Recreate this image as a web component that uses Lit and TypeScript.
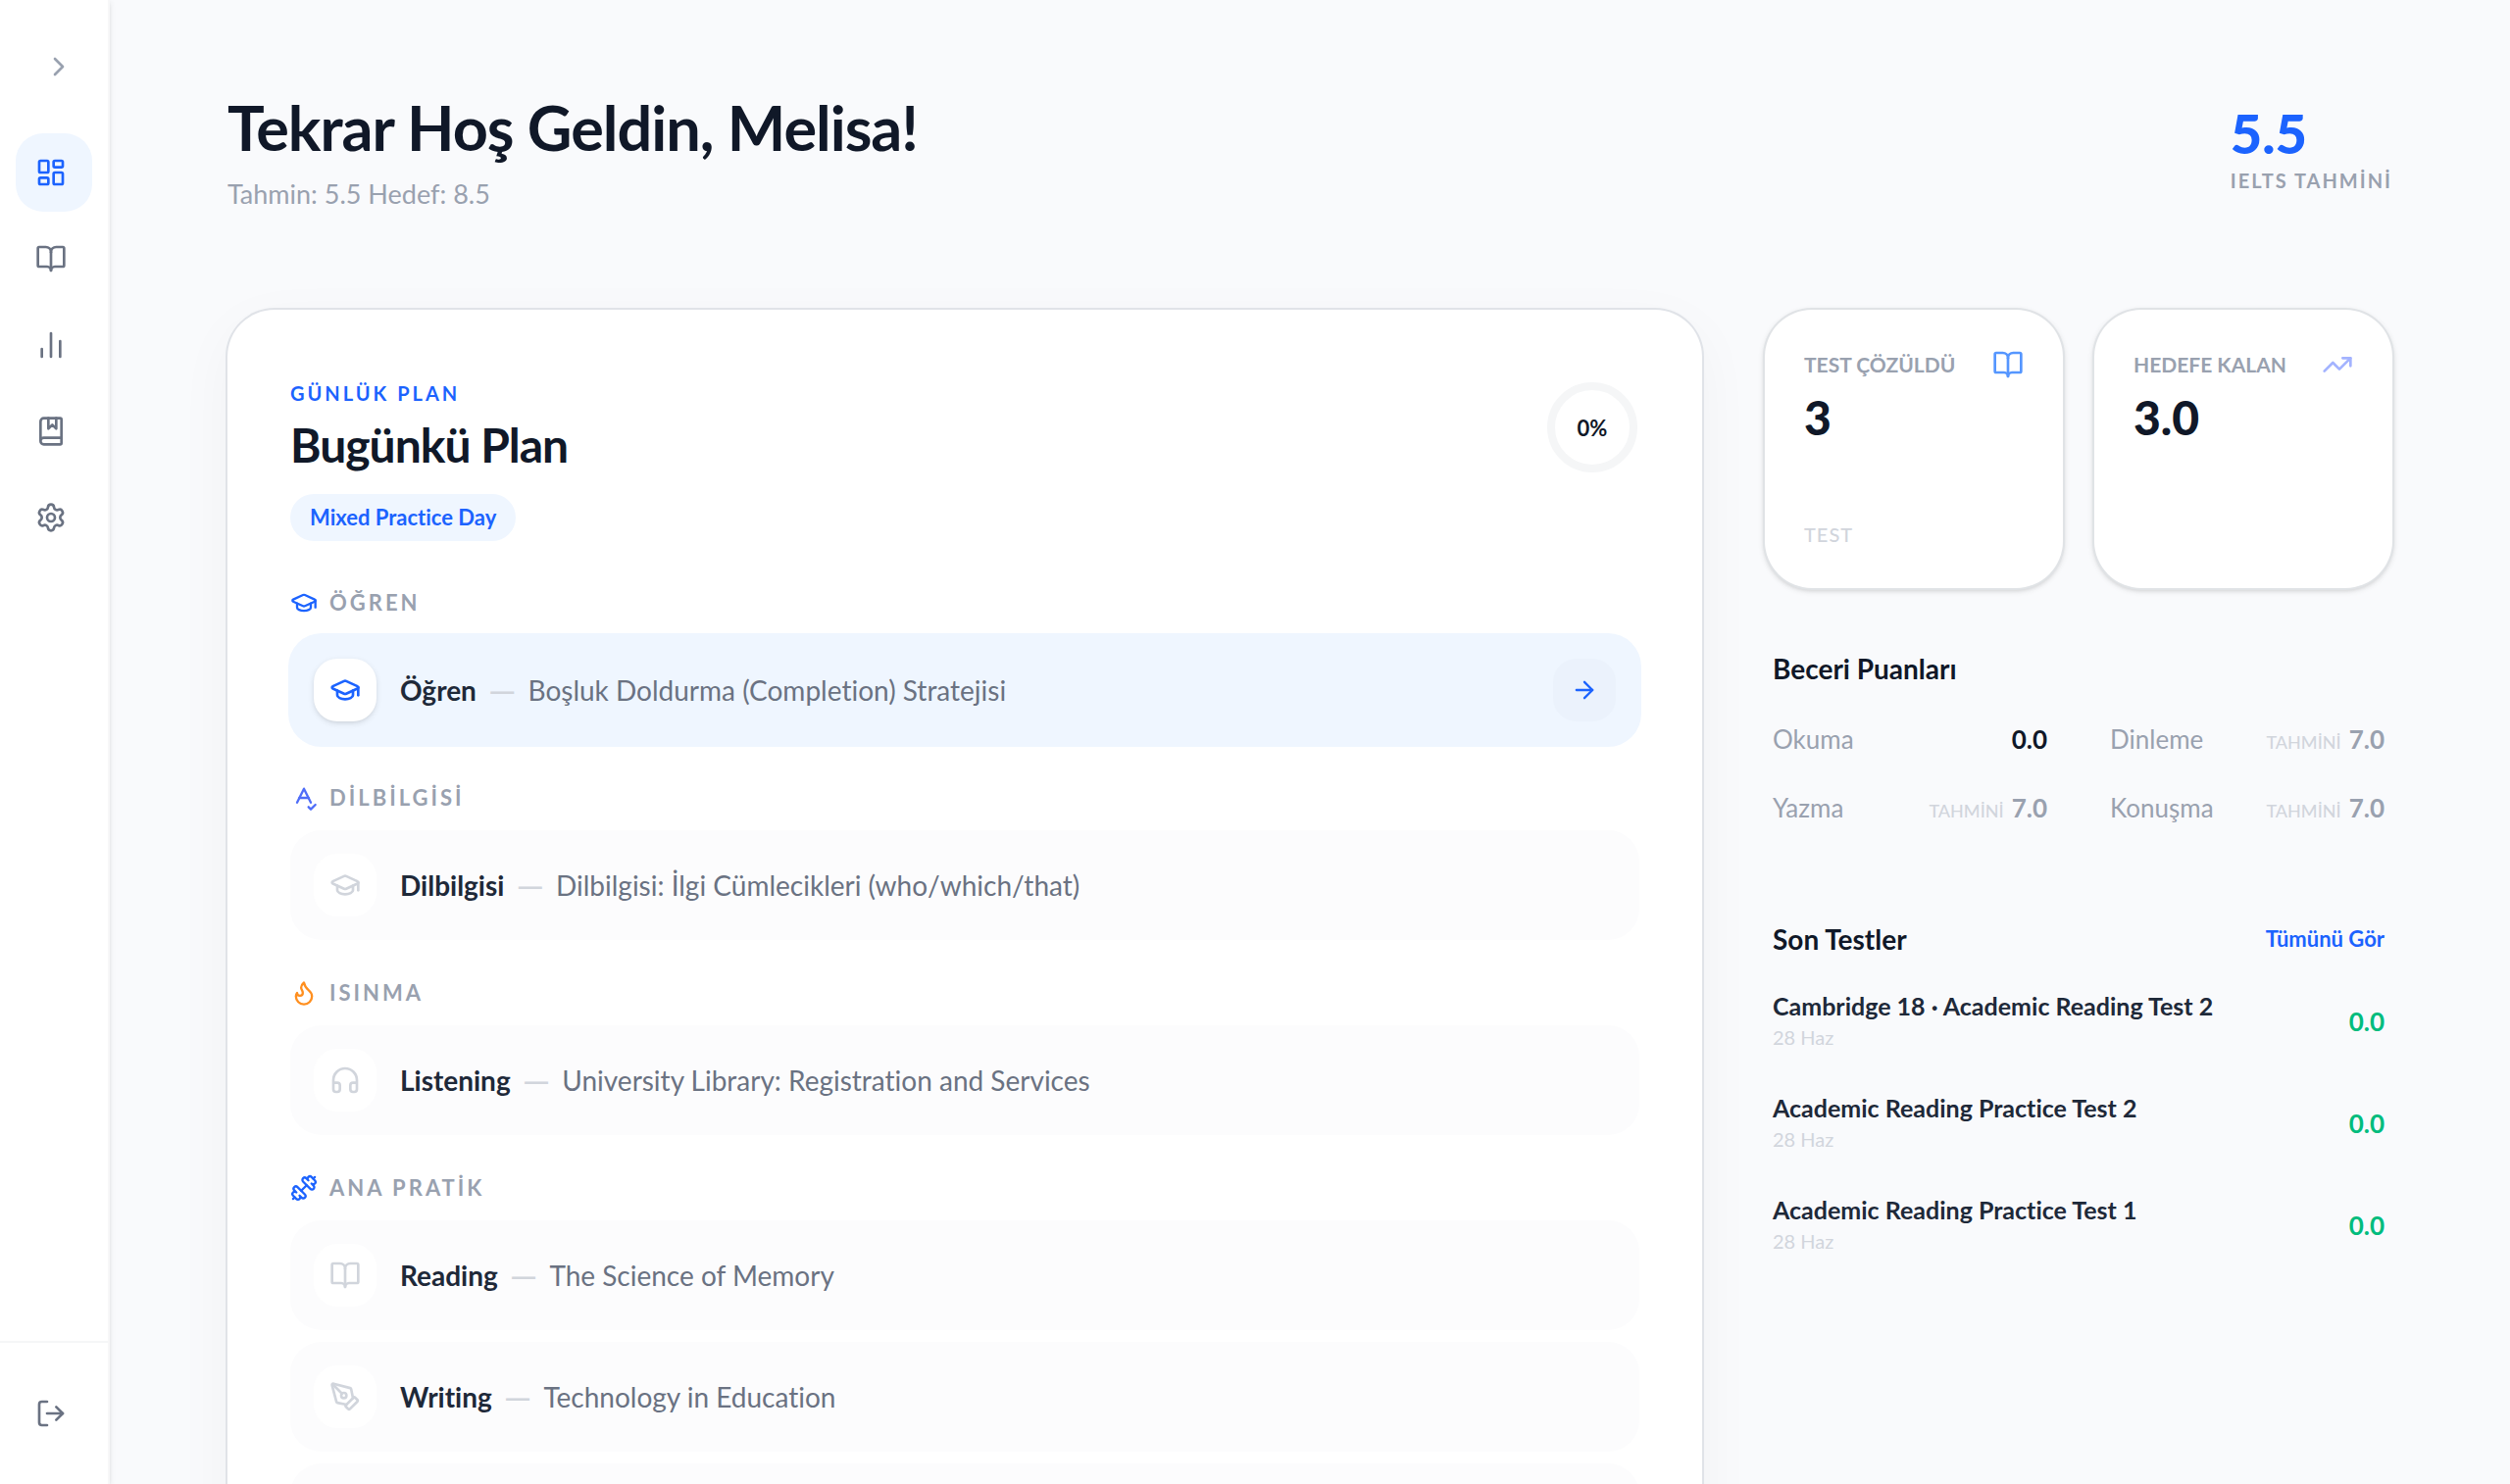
import { LitElement, html, css, svg, nothing } from "lit";
import { customElement, property, state } from "lit/decorators.js";
import { classMap } from "lit/directives/class-map.js";

const p = (...ds: string[]) => svg`${ds.map((d) => svg`<path d=${d}></path>`)}`;

const ICONS: Record<string, unknown> = {
  chevron: p("m9 18 6-6-6-6"),
  dashboard: svg`<rect width="7" height="9" x="3" y="3" rx="1"></rect><rect width="7" height="5" x="14" y="3" rx="1"></rect><rect width="7" height="9" x="14" y="12" rx="1"></rect><rect width="7" height="5" x="3" y="16" rx="1"></rect>`,
  book: p(
    "M12 7v14",
    "M3 18a1 1 0 0 1-1-1V4a1 1 0 0 1 1-1h5a4 4 0 0 1 4 4 4 4 0 0 1 4-4h5a1 1 0 0 1 1 1v13a1 1 0 0 1-1 1h-6a3 3 0 0 0-3 3 3 3 0 0 0-3-3z"
  ),
  bars: p("M5 21v-6", "M12 21V3", "M19 21V9"),
  marked: p(
    "M10 2v8l3-3 3 3V2",
    "M4 19.5v-15A2.5 2.5 0 0 1 6.5 2H19a1 1 0 0 1 1 1v18a1 1 0 0 1-1 1H6.5a1 1 0 0 1 0-5H20"
  ),
  settings: svg`<path d="M9.671 4.136a2.34 2.34 0 0 1 4.659 0 2.34 2.34 0 0 0 3.319 1.915 2.34 2.34 0 0 1 2.33 4.033 2.34 2.34 0 0 0 0 3.831 2.34 2.34 0 0 1-2.33 4.033 2.34 2.34 0 0 0-3.319 1.915 2.34 2.34 0 0 1-4.659 0 2.34 2.34 0 0 0-3.32-1.915 2.34 2.34 0 0 1-2.33-4.033 2.34 2.34 0 0 0 0-3.831A2.34 2.34 0 0 1 6.35 6.051a2.34 2.34 0 0 0 3.319-1.915"></path><circle cx="12" cy="12" r="3"></circle>`,
  logout: p("m16 17 5-5-5-5", "M21 12H9", "M9 21H5a2 2 0 0 1-2-2V5a2 2 0 0 1 2-2h4"),
  cap: p(
    "M21.42 10.922a1 1 0 0 0-.019-1.838L12.83 5.18a2 2 0 0 0-1.66 0L2.6 9.08a1 1 0 0 0 0 1.832l8.57 3.908a2 2 0 0 0 1.66 0z",
    "M22 10v6",
    "M6 12.5V16a6 3 0 0 0 12 0v-3.5"
  ),
  spell: p("m6 16 6-12 6 12", "M8 12h8", "m16 20 2 2 4-4"),
  flame: p(
    "M8.5 14.5A2.5 2.5 0 0 0 11 12c0-1.38-.5-2-1-3-1.072-2.143-.224-4.054 2-6 .5 2.5 2 4.9 4 6.5 2 1.6 3 3.5 3 5.5a7 7 0 1 1-14 0c0-1.153.433-2.294 1-3a2.5 2.5 0 0 0 2.5 2.5z"
  ),
  dumbbell: p(
    "M17.596 12.768a2 2 0 1 0 2.829-2.829l-1.768-1.767a2 2 0 0 0 2.828-2.829l-2.828-2.828a2 2 0 0 0-2.829 2.828l-1.767-1.768a2 2 0 1 0-2.829 2.829z",
    "m2.5 21.5 1.4-1.4",
    "m20.1 3.9 1.4-1.4",
    "M5.343 21.485a2 2 0 1 0 2.829-2.828l1.767 1.768a2 2 0 1 0 2.829-2.829l-6.364-6.364a2 2 0 1 0-2.829 2.829l1.768 1.767a2 2 0 0 0-2.828 2.829z",
    "m9.6 14.4 4.8-4.8"
  ),
  headphones: p(
    "M3 14h3a2 2 0 0 1 2 2v3a2 2 0 0 1-2 2H5a2 2 0 0 1-2-2v-7a9 9 0 0 1 18 0v7a2 2 0 0 1-2 2h-1a2 2 0 0 1-2-2v-3a2 2 0 0 1 2-2h3"
  ),
  pen: svg`${p(
    "M15.707 21.293a1 1 0 0 1-1.414 0l-1.586-1.586a1 1 0 0 1 0-1.414l5.586-5.586a1 1 0 0 1 1.414 0l1.586 1.586a1 1 0 0 1 0 1.414z",
    "m18 13-1.375-6.874a1 1 0 0 0-.746-.776L3.235 2.028a1 1 0 0 0-1.207 1.207L5.35 15.879a1 1 0 0 0 .776.746L13 18",
    "m2.3 2.3 7.286 7.286"
  )}<circle cx="11" cy="11" r="2"></circle>`,
  arrow: p("M5 12h14", "m12 5 7 7-7 7"),
  trend: p("M16 7h6v6", "m22 7-8.5 8.5-5-5L2 17"),
};

const icon = (name: string, cls = "") => html`<svg
  class="icon ${cls}"
  viewBox="0 0 24 24"
  aria-hidden="true"
>
  ${ICONS[name]}
</svg>`;

const base = css`
  * {
    box-sizing: border-box;
    margin: 0;
    padding: 0;
  }
  button {
    font: inherit;
    color: inherit;
    border: 0;
    background: none;
    cursor: pointer;
  }
  a {
    color: inherit;
    text-decoration: none;
  }
  ul {
    list-style: none;
  }
  .icon {
    display: block;
    flex: none;
    width: 32px;
    height: 32px;
    fill: none;
    stroke: currentColor;
    stroke-width: 2;
    stroke-linecap: round;
    stroke-linejoin: round;
  }
  .icon.small {
    width: 28px;
    height: 28px;
  }
`;

@customElement("app-sidebar")
class AppSidebar extends LitElement {
  @state() private current = "dashboard";
  private items = ["dashboard", "book", "bars", "marked", "settings"];

  static styles = [
    base,
    css`
      :host {
        display: flex;
        flex-direction: column;
        flex: none;
        width: 112px;
        background: #fff;
        border-right: 2px solid #f7f7f8;
        box-shadow: 0 2px 6px rgba(0, 0, 0, 0.1), 0 2px 4px -2px rgba(0, 0, 0, 0.1);
      }
      .top {
        display: flex;
        justify-content: flex-end;
        padding: 40px 22px 40px 16px;
      }
      .toggle {
        display: grid;
        place-items: center;
        width: 56px;
        height: 56px;
        color: #99a1af;
      }
      .nav {
        flex: 1;
        display: flex;
        flex-direction: column;
        gap: 8px;
        padding: 0 16px;
      }
      .item {
        display: flex;
        align-items: center;
        width: 100%;
        height: 80px;
        padding: 0 20px;
        border-radius: 28px;
        color: #6a7282;
      }
      .item.active {
        background: #eff6ff;
        color: #1c63fe;
      }
      .foot {
        padding: 32px 16px;
        border-top: 2px solid #f5f6f7;
      }
    `,
  ];

  render() {
    return html`
      <div class="top">
        <button class="toggle">${icon("chevron")}</button>
      </div>
      <nav class="nav">
        ${this.items.map(
          (name) => html`<button
            class=${classMap({ item: true, active: name === this.current })}
            @click=${() => (this.current = name)}
          >
            ${icon(name)}
          </button>`
        )}
      </nav>
      <div class="foot"><button class="item">${icon("logout")}</button></div>
    `;
  }
}

interface Task {
  icon?: string;
  name?: string;
  text?: string;
  active?: boolean;
}
interface Section {
  icon: string;
  tone: string;
  title: string;
  tasks: Task[];
}

const SECTIONS: Section[] = [
  {
    icon: "cap",
    tone: "blue",
    title: "ÖĞREN",
    tasks: [{ icon: "cap", name: "Öğren", text: "Boşluk Doldurma (Completion) Stratejisi", active: true }],
  },
  {
    icon: "spell",
    tone: "indigo",
    title: "DİLBİLGİSİ",
    tasks: [{ icon: "cap", name: "Dilbilgisi", text: "Dilbilgisi: İlgi Cümlecikleri (who/which/that)" }],
  },
  {
    icon: "flame",
    tone: "orange",
    title: "ISINMA",
    tasks: [{ icon: "headphones", name: "Listening", text: "University Library: Registration and Services" }],
  },
  {
    icon: "dumbbell",
    tone: "blue",
    title: "ANA PRATİK",
    tasks: [
      { icon: "book", name: "Reading", text: "The Science of Memory" },
      { icon: "pen", name: "Writing", text: "Technology in Education" },
      {},
    ],
  },
];

@customElement("daily-plan")
class DailyPlan extends LitElement {
  @property({ type: Number }) progress = 0;

  static styles = [
    base,
    css`
      :host {
        display: block;
      }
      .card {
        padding: 72px 64px;
        background: #fff;
        border-radius: 48px;
        box-shadow: 0 0 0 2px #e0e3e8, 0 16px 60px rgba(0, 0, 0, 0.04);
      }
      .head {
        display: flex;
        justify-content: space-between;
        align-items: flex-start;
        margin-bottom: 49px;
      }
      .eyebrow {
        font-size: 20px;
        line-height: 26px;
        font-weight: 700;
        letter-spacing: 3px;
        color: #1c63fe;
      }
      h2 {
        margin: 10px 0 20px;
        font-size: 48px;
        line-height: 60px;
        font-weight: 700;
        letter-spacing: -1px;
        color: #101828;
      }
      .badge {
        display: inline-block;
        padding: 0 20px;
        font-size: 22px;
        line-height: 48px;
        font-weight: 700;
        border-radius: 24px;
        background: #eff6ff;
        color: #1c63fe;
      }
      .ring {
        display: grid;
        place-items: center;
        width: 92px;
        height: 92px;
        margin: 2px;
        border: 8px solid #f5f6f7;
        border-radius: 50%;
        font-size: 22px;
        font-weight: 700;
        color: #101828;
      }
      .sections {
        display: grid;
        gap: 40px;
      }
      .label {
        display: flex;
        align-items: center;
        gap: 12px;
        margin-bottom: 19px;
        font-size: 22px;
        line-height: 28px;
        font-weight: 700;
        letter-spacing: 3px;
        color: #99a1af;
      }
      .blue {
        color: #1c63fe;
      }
      .indigo {
        color: #4f6df8;
      }
      .orange {
        color: #ff8f1f;
      }
      .tasks {
        display: grid;
        gap: 12px;
      }
      .task {
        display: flex;
        align-items: center;
        gap: 24px;
        min-height: 112px;
        padding: 24px;
        border-radius: 32px;
        background: #fcfcfd;
      }
      .task.active {
        background: #eff6ff;
        box-shadow: 0 0 0 2px #eff6ff;
      }
      .tile {
        display: grid;
        place-items: center;
        flex: none;
        width: 64px;
        height: 64px;
        border-radius: 24px;
        background: #fff;
        color: #d1d5dc;
      }
      .active .tile {
        color: #1c63fe;
        box-shadow: 0 2px 6px rgba(0, 0, 0, 0.1), 0 2px 4px -2px rgba(0, 0, 0, 0.1);
      }
      .line {
        display: flex;
        align-items: center;
        gap: 12px;
        flex: 1;
        font-size: 28px;
        line-height: 40px;
        color: #6a7282;
      }
      .name {
        font-weight: 700;
        color: #1e2939;
      }
      .dash {
        font-size: 36px;
        color: #d1d5dc;
      }
      .go {
        display: grid;
        place-items: center;
        width: 64px;
        height: 64px;
        border-radius: 24px;
        background: #ebf2fc;
        color: #1c63fe;
      }
    `,
  ];

  private task(t: Task) {
    return html`<li class=${classMap({ task: true, active: !!t.active })}>
      ${t.icon
        ? html`<span class="tile">${icon(t.icon)}</span>
            <p class="line">
              <strong class="name">${t.name}</strong><span class="dash">—</span><span>${t.text}</span>
            </p>`
        : nothing}
      ${t.active ? html`<button class="go">${icon("arrow", "small")}</button>` : nothing}
    </li>`;
  }

  render() {
    return html`<article class="card">
      <header class="head">
        <div>
          <p class="eyebrow">GÜNLÜK PLAN</p>
          <h2>Bugünkü Plan</h2>
          <span class="badge">Mixed Practice Day</span>
        </div>
        <div class="ring">${this.progress}%</div>
      </header>
      <div class="sections">
        ${SECTIONS.map(
          (s) => html`<section>
            <h3 class="label">${icon(s.icon, `small ${s.tone}`)}${s.title}</h3>
            <ul class="tasks">
              ${s.tasks.map((t) => this.task(t))}
            </ul>
          </section>`
        )}
      </div>
    </article>`;
  }
}

const STATS = [
  { label: "TEST ÇÖZÜLDÜ", value: "3", note: "TEST", icon: "book", tone: "sky" },
  { label: "HEDEFE KALAN", value: "3.0", note: "", icon: "trend", tone: "lilac" },
];
const SKILLS = [
  { name: "Okuma", score: "0.0", guess: false },
  { name: "Dinleme", score: "7.0", guess: true },
  { name: "Yazma", score: "7.0", guess: true },
  { name: "Konuşma", score: "7.0", guess: true },
];
const TESTS = [
  { name: "Cambridge 18 · Academic Reading Test 2", date: "28 Haz", score: "0.0" },
  { name: "Academic Reading Practice Test 2", date: "28 Haz", score: "0.0" },
  { name: "Academic Reading Practice Test 1", date: "28 Haz", score: "0.0" },
];

@customElement("side-panel")
class SidePanel extends LitElement {
  static styles = [
    base,
    css`
      :host {
        display: block;
      }
      .stats {
        display: grid;
        grid-template-columns: 1fr 1fr;
        gap: 32px;
      }
      .stat {
        display: flex;
        flex-direction: column;
        min-height: 284px;
        padding: 40px;
        background: #fff;
        border-radius: 48px;
        box-shadow: 0 0 0 2px #e0e3e6, 0 2px 6px 1px rgba(0, 0, 0, 0.12), 0 2px 4px rgba(0, 0, 0, 0.1);
      }
      .stat-head {
        display: flex;
        align-items: center;
        justify-content: space-between;
        font-size: 21px;
        line-height: 32px;
        font-weight: 700;
        color: #99a1af;
        white-space: nowrap;
      }
      .sky {
        color: #5596ff;
      }
      .lilac {
        color: #a3b3ff;
      }
      .value {
        margin-top: 8px;
        font-size: 48px;
        line-height: 60px;
        font-weight: 900;
        color: #101828;
      }
      .note {
        margin-top: auto;
        font-size: 20px;
        line-height: 30px;
        letter-spacing: 1px;
        font-weight: 500;
        color: #d1d5dc;
      }
      .block {
        padding: 0 8px;
      }
      .skills {
        margin-top: 62px;
      }
      .tests {
        margin-top: 94px;
      }
      .block-head {
        display: flex;
        align-items: center;
        justify-content: space-between;
      }
      h2 {
        font-size: 28px;
        line-height: 40px;
        font-weight: 700;
        color: #101828;
      }
      .grid {
        display: grid;
        grid-template-columns: 1fr 1fr;
        gap: 30px 64px;
        margin-top: 32px;
      }
      .skill {
        display: flex;
        align-items: baseline;
        gap: 8px;
        font-size: 26px;
        line-height: 40px;
        color: #99a1af;
      }
      .skill-name {
        flex: 1;
      }
      .guess {
        font-size: 18px;
        line-height: 24px;
        font-weight: 500;
        color: #d1d5dc;
      }
      .skill-score {
        font-weight: 700;
      }
      .known {
        color: #101828;
      }
      .all {
        font-size: 22px;
        line-height: 32px;
        font-weight: 700;
        color: #1c63fe;
      }
      .list {
        display: grid;
        gap: 40px;
        margin-top: 32px;
      }
      .test {
        display: flex;
        align-items: center;
        justify-content: space-between;
      }
      .test-name {
        font-size: 25px;
        line-height: 32px;
        font-weight: 700;
        color: #1e2939;
      }
      .date {
        font-size: 20px;
        line-height: 32px;
        color: #d1d5dc;
      }
      .test-score {
        font-size: 26px;
        line-height: 40px;
        font-weight: 700;
        color: #00bc7d;
      }
    `,
  ];

  render() {
    return html`
      <div class="stats">
        ${STATS.map(
          (s) => html`<article class="stat">
            <div class="stat-head"><span>${s.label}</span>${icon(s.icon, s.tone)}</div>
            <p class="value">${s.value}</p>
            ${s.note ? html`<p class="note">${s.note}</p>` : nothing}
          </article>`
        )}
      </div>
      <section class="block skills">
        <h2>Beceri Puanları</h2>
        <div class="grid">
          ${SKILLS.map(
            (s) => html`<div class="skill">
              <span class="skill-name">${s.name}</span>
              ${s.guess ? html`<span class="guess">TAHMİNİ</span>` : nothing}
              <span class=${classMap({ "skill-score": true, known: !s.guess })}>${s.score}</span>
            </div>`
          )}
        </div>
      </section>
      <section class="block tests">
        <div class="block-head">
          <h2>Son Testler</h2>
          <a class="all" href="#">Tümünü Gör</a>
        </div>
        <ul class="list">
          ${TESTS.map(
            (t) => html`<li class="test">
              <div>
                <p class="test-name">${t.name}</p>
                <p class="date">${t.date}</p>
              </div>
              <span class="test-score">${t.score}</span>
            </li>`
          )}
        </ul>
      </section>
    `;
  }
}

@customElement("app-root")
class AppRoot extends LitElement {
  static styles = [
    base,
    css`
      :host {
        display: flex;
        height: 100vh;
        overflow: hidden;
        background: #f9fafc;
        font-family: Lato, "Open Sans", sans-serif;
        font-variant-ligatures: none;
      }
      app-sidebar {
        z-index: 1;
      }
      .main {
        flex: 1;
        min-width: 0;
        overflow-y: auto;
        scrollbar-width: none;
        padding: 90px 120px 64px;
      }
      .hero {
        display: flex;
        justify-content: space-between;
        align-items: flex-start;
        margin-bottom: 98px;
      }
      h1 {
        font-size: 63px;
        line-height: 80px;
        font-weight: 700;
        letter-spacing: -1px;
        color: #101828;
      }
      .sub {
        margin-top: 8px;
        font-size: 27px;
        line-height: 40px;
        color: #99a1af;
      }
      .band {
        padding-top: 14px;
      }
      .band-value {
        font-size: 56px;
        line-height: 64px;
        font-weight: 900;
        color: #1c63fe;
      }
      .band-label {
        font-size: 20px;
        line-height: 32px;
        font-weight: 700;
        letter-spacing: 2px;
        color: #99a1af;
      }
      .columns {
        display: grid;
        grid-template-columns: minmax(0, 47fr) minmax(0, 20fr);
        gap: 64px;
        align-items: start;
      }
    `,
  ];

  render() {
    return html`
      <app-sidebar></app-sidebar>
      <main class="main">
        <header class="hero">
          <div>
            <h1>Tekrar Hoş Geldin, Melisa!</h1>
            <p class="sub">Tahmin: 5.5 Hedef: 8.5</p>
          </div>
          <div class="band">
            <p class="band-value">5.5</p>
            <p class="band-label">IELTS TAHMİNİ</p>
          </div>
        </header>
        <div class="columns">
          <daily-plan></daily-plan>
          <side-panel></side-panel>
        </div>
      </main>
    `;
  }
}
